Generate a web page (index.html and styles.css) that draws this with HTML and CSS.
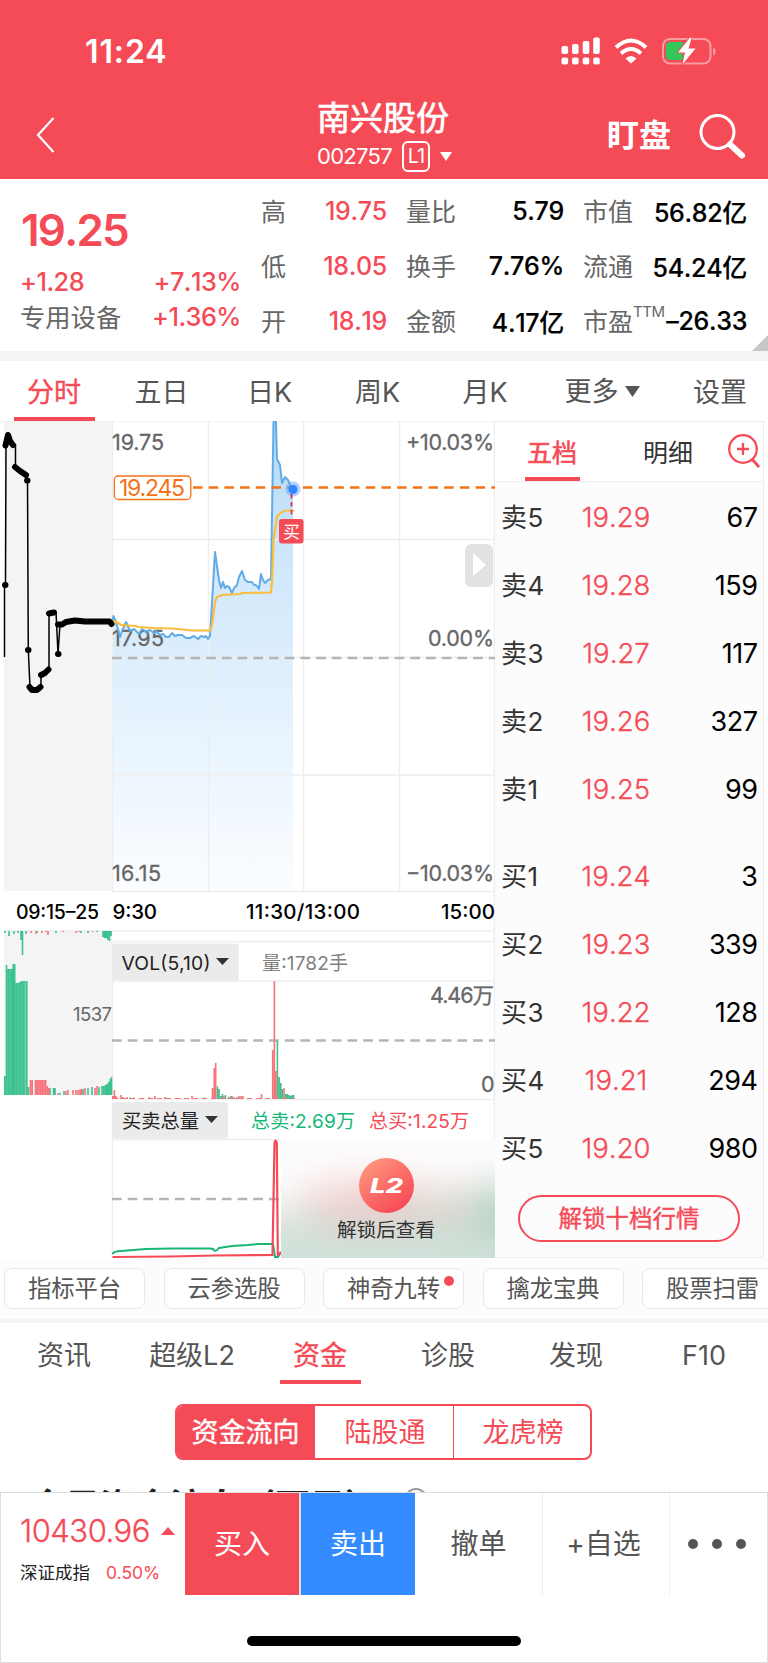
FILE: index.html
```html
<!DOCTYPE html>
<html lang="zh-CN">
<head>
<meta charset="utf-8">
<title>南兴股份 002757</title>
<link rel="stylesheet" href="styles.css">
</head>
<body>
<div class="app">
  <header class="header">
    <div class="status">
      <span class="clock">11:24</span>
      <svg class="status-icons" width="160" height="32" viewBox="558 36 160 32">
        <g fill="#fff">
          <rect x="561.5" y="46" width="6.6" height="8" rx="2"/><rect x="572" y="44" width="6.6" height="10" rx="2"/><rect x="582.7" y="41" width="6.6" height="13" rx="2"/><rect x="593.2" y="37.500" width="6.600" height="16.500" rx="2"/>
          <rect x="561.500" y="57.500" width="6.600" height="7" rx="2"/><rect x="572" y="57.500" width="6.600" height="7" rx="2"/><rect x="582.700" y="57.500" width="6.600" height="7" rx="2"/><rect x="593.200" y="57.500" width="6.600" height="7" rx="2"/>
          <path d="M625.500 58.500Q631 53.500 636.500 58.500L631 63.500Z"/>
        </g>
        <g fill="none" stroke="#fff" stroke-width="4"><path d="M616 47.500Q631 33.500 646 47.500"/><path d="M621 53.500Q631 44.500 641 53.500"/></g>
        <rect x="663" y="39" width="47.500" height="24.500" rx="7" fill="none" stroke="#fff" stroke-opacity=".45" stroke-width="2"/>
        <path d="M713.300 47.500c3 1.500 3 6.500 0 8z" fill="#fff" fill-opacity=".5"/>
        <path d="M670 42H683V60H670Q666 60 666 56V46Q666 42 670 42Z" fill="#34c759"/>
        <path d="M690 37.500L678 52.500H685L682.500 64.500L695.500 48.500H688.500L691.500 38Z" fill="#fff" stroke="#f54b57" stroke-width="2" paint-order="stroke" stroke-linejoin="round"/>
      </svg>
    </div>
    <div class="navbar">
      <svg class="back" width="20" height="38" viewBox="0 0 20 38"><path d="M17.500 2L2 19L17.500 36" fill="none" stroke="#fff" stroke-width="2.200"/></svg>
      <div class="title">
        <h1>南兴股份</h1>
        <p><span class="code">002757</span><span class="level">L1</span><svg width="12" height="9"><path d="M0 0H12L6 9Z" fill="#fff"/></svg></p>
      </div>
      <span class="watch">盯盘</span>
      <svg class="search" width="48" height="48" viewBox="0 0 48 48" fill="none" stroke="#fff"><circle cx="18.500" cy="18" r="16.500" stroke-width="3"/><path d="M31 30.500L43 41.500" stroke-width="6" stroke-linecap="round"/></svg>
    </div>
  </header>

  <section class="quote">
    <div class="price-box">
      <strong class="price">19.25</strong>
      <div class="pair"><b>+1.28</b><b>+7.13%</b></div>
      <div class="pair"><span>专用设备</span><b>+1.36%</b></div>
    </div>
    <dl class="stats">
      <div><dt>高</dt><dd class="up">19.75</dd></div><div><dt>量比</dt><dd>5.79</dd></div><div><dt>市值</dt><dd>56.82亿</dd></div>
      <div><dt>低</dt><dd class="up">18.05</dd></div><div><dt>换手</dt><dd>7.76%</dd></div><div><dt>流通</dt><dd>54.24亿</dd></div>
      <div><dt>开</dt><dd class="up">18.19</dd></div><div><dt>金额</dt><dd>4.17亿</dd></div><div><dt>市盈<sup>TTM</sup></dt><dd>–26.33</dd></div>
    </dl>
    <svg class="corner" width="16" height="16"><path d="M16 0V16H0Z" fill="#c6c6c6"/></svg>
  </section>

  <nav class="periods">
    <span class="active">分时</span><span>五日</span><span>日K</span><span>周K</span><span>月K</span>
    <span class="more">更多<svg width="15" height="11"><path d="M0 0H15L7.500 11Z" fill="#555"/></svg></span><span>设置</span>
  </nav>

  <main class="board">
    <svg class="charts" width="495" height="838" viewBox="0 421 495 838">
      <defs>
        <linearGradient id="area" x1="0" y1="421" x2="0" y2="891" gradientUnits="userSpaceOnUse"><stop offset="0" stop-color="#b4d8f6"/><stop offset=".3" stop-color="#d0e7fb"/><stop offset=".65" stop-color="#e6f3fe"/><stop offset="1" stop-color="#fbfdff"/></linearGradient>
        <linearGradient id="badge" x1="0" y1="0" x2=".7" y2="1"><stop offset="0" stop-color="#ff9f80"/><stop offset="1" stop-color="#f74956"/></linearGradient>
        <filter id="soft" x="-100%" y="-100%" width="300%" height="300%"><feGaussianBlur stdDeviation="22 20"/></filter>
        <clipPath id="lock"><rect x="281" y="1139" width="214" height="119"/></clipPath>
      </defs>
      <rect x="4" y="421" width="108" height="470" fill="#f4f4f4"/>
      <rect x="4" y="931" width="108" height="164" fill="#f4f4f4"/>
      <path d="M293 488V891H112V623L113.500 616L116 622L120 637L122 631L126 622L130 631L134 629L139 634L142 629L150 632L156 631L160 635L166 637L172 633L178 636L182 635L190 638L198 637L204 636L208 639L210 636L215 552L219 580L221 588L223 582L225 588L229 587L232 593L237 585L239 577L242 571L245 580L252 582L256 585L259 589L261 574L265 583L268 580L271 579L273.500 421H276L277 459L280 465L282 483L285 477L288 480L291 487Z" fill="url(#area)"/>
      <g class="grid"><path d="M0 421H495M112 539.500H495M112 657.500H495M112 775H495M112 891.500H495M4 930.700H495M112 941.500H495M112 981.300H495M112 1099.500H495M112 1139.500H281"/><path d="M112.500 421V891M208.500 421V891M303.500 421V891M399.500 421V891M112.500 941V1258M494.500 421V1258"/></g>
      <g class="axis">
        <text x="112" y="450" textLength="52">19.75</text><text x="406" y="450" textLength="88">+10.03%</text>
        <text x="112" y="646" textLength="52">17.95</text><text x="428" y="646" textLength="66">0.00%</text>
        <text x="112" y="881" textLength="49">16.15</text><text x="406" y="881" textLength="88">−10.03%</text>
        <text x="430" y="1003" textLength="64">4.46万</text><text x="481" y="1092">0</text>
      </g>
      <text class="num19" x="73" y="1020.500" textLength="39">1537</text>
      <path class="dash" d="M112 658H495M112 1040.500H495M112 1199H281"/>
      <path d="M112 623L113.500 616L116 622L120 637L122 631L126 622L130 631L134 629L139 634L142 629L146 632L150 630L154 633L156 631L160 635L163 634L166 637L169 637L172 633L175 636L178 635L182 635L186 638L190 638L194 636L198 639L201 636L204 637L206 636L208 639L210 636L215 552L219 580L221 588L223 582L225 588L227 586L229 587L232 593L234 588L237 585L239 577L242 571L245 580L248 582L252 582L254 585L256 585L259 589L261 574L263 580L265 583L268 580L271 579L273.500 422H276L277 459L280 465L282 483L285 477L288 480L291 487L293 488" fill="none" stroke="#61abe6" stroke-width="2" stroke-linejoin="round"/>
      <path d="M112 623L115 621L121 625L136 626L138 627L153 628L173 628.500L192 630.500H210L212 625L215 602L217 597L222 595L240 594L242 593L271 592.500L272 582L273.500 540L277 517Q281 511 287 510.500H294" fill="none" stroke="#fbbd3e" stroke-width="2.200" stroke-linejoin="round"/>
      <path d="M4.500 657V585H5.500L6 445L8 435L10 441L13 445H15.500V467L20 471L26 475L27.500 480L28.300 650L30 687L32 690H37L41 687V675L49 669.500V613.500L54 612H56L58 654L60 624L66 621L75 620L85 621.500H111" fill="none" stroke="#000" stroke-width="1.500"/>
      <path d="M5 585h.5M5.500 445.500L8 435L10 441L13 445M15 467L20 471L26 475M27 480.500h.5M28 650h.5M29.500 687L32 690H37L40.500 687M41 675L45 673L48.500 669.500M49 613.500L54 612.500M58 654h.5M58 624.500H62L66 622L75 620.500L85 621.500H109.500L111.500 624" fill="none" stroke="#000" stroke-width="6" stroke-linecap="round" stroke-linejoin="round"/>
      <path d="M193 487.500H495" stroke="#f5711a" stroke-width="2.400" stroke-dasharray="9.500 6.200"/>
      <rect x="114.300" y="476" width="76.500" height="23.500" rx="4" fill="#fff" stroke="#f5711a" stroke-width="1.300"/>
      <text class="last" x="119" y="496" textLength="66">19.245</text>
      <circle cx="293" cy="489" r="7.500" fill="#62a5ff" fill-opacity=".5"/><path d="M291.500 486V516" stroke="#e6324b" stroke-width="1.800" stroke-dasharray="4.500 3.500"/><circle cx="293" cy="489.500" r="4.500" fill="#2f86ff"/>
      <rect x="279" y="519" width="24.500" height="24.500" rx="3" fill="#f54b57"/><text class="buy-mark" x="283" y="538">买</text>
      <rect x="465" y="544" width="28" height="43" rx="6" fill="#e2e2e2"/><path d="M473 553L486 565L473 576Z" fill="#fff"/>
      <g class="times"><text class="thin" x="16" y="919" textLength="83">09:15–25</text><text x="112.500" y="919" textLength="44.500">9:30</text><text x="246" y="919" textLength="114">11:30/13:00</text><text x="441" y="919" textLength="54">15:00</text></g>
      <rect x="112" y="943.500" width="127" height="37" rx="3" fill="#ebebeb"/><text class="menu" x="121.500" y="969.500" textLength="89">VOL(5,10)</text><path d="M216 958H229L222.500 965Z" fill="#333"/>
      <text class="info" x="262" y="969.500" textLength="86" fill="#808080">量:1782手</text>
      <rect x="112" y="1102" width="116" height="36.500" rx="3" fill="#ebebeb"/><text class="menu" x="122" y="1127.500" textLength="77">买卖总量</text><path d="M205 1116H218L211.500 1123Z" fill="#333"/>
      <text class="info" x="251" y="1127.500" textLength="104" fill="#12b877">总卖:2.69万</text><text class="info" x="369" y="1127.500" textLength="100" fill="#f54b57">总买:1.25万</text>
      <g fill="none" stroke="#3cc28f" stroke-width="1.600">
        <path d="M4.800 1076V1095M6.500 965V1095M8.200 969V1095M9.900 969V1095M11.600 969V1095M13.200 964V1095M14.700 964V1095M16.400 983V1095M18.100 983V1095M19.800 982V1095M21.500 981V1095M23.200 981V1095M24.900 981V1095M26.800 981V1095M28.500 1087V1095"/>
        <path d="M50 1088V1095M53.500 1088V1095M55 1088V1095M60 1093V1095M64 1091V1095M83 1089V1095M88 1088V1095M92 1087V1095M99 1087V1095M102 1086V1095M103.700 1086V1095M105.400 1085V1095M107 1084V1095M108.600 1082V1095M110.200 1079V1095M111.500 1077V1095"/>
        <path d="M5 931V933M9 931V936M14 931V934M18 931V933M21 931V940M22.500 931V955M26 931V934M37 931V933M56 931V933M81 931V933M88 931V933M97 931V932M103 931V937M104.600 931V938M106.200 931V938M107.800 931V940M109.500 931V941M111 931V936"/>
        <path d="M217.400 1086.500V1099M219 1089V1099M221 1096V1099M222.500 1094V1099M225.500 1095V1099M228.500 1097V1099M232 1096V1099M237 1097V1099M130 1097.500V1099M155 1097.500V1099M166 1097.500V1099M204 1097.500V1099M277.400 1041V1099M279.100 1077V1099M280.800 1083V1099M282.500 1089V1099M285.700 1094V1099M287.300 1094V1099M289 1095V1099M290.600 1096V1099M292 1095V1099M293.500 1095V1099"/>
      </g>
      <g fill="none" stroke="#f7747d" stroke-width="1.600">
        <path d="M30.500 1080V1095M32.200 1080V1095M35.500 1080V1095M37.200 1080V1095M38.900 1080V1095M40.600 1080V1095M42.300 1080V1095M44 1080V1095M45.700 1080V1095M47.400 1086V1095M49 1088V1095M58 1093V1095M66 1091V1095M68 1090V1095M73 1090V1095M76 1090V1095M78 1090V1095M80 1089.500V1095M81.500 1089V1095M85 1088V1095M95 1088V1095M97 1086V1095"/>
        <path d="M31 931V933M36 931V934M42 931V933M46 931V932M48 931V935M63 931V932M76 931V933M79 931V932M93 931V932"/>
        <path d="M112.800 1096V1099M114.400 1090V1099M116 1096V1099M117.500 1098V1099M121 1095V1099M123 1097V1099M127 1097V1099M134 1097.500V1099M142 1098V1099M149 1097V1099M155 1096V1099M165 1097V1099M180 1098V1099M192 1096V1099M212.500 1088V1099M214.200 1068V1099M215.700 1063V1099M224 1096V1099M230.500 1096V1099M234 1097V1099M236 1098V1099M239 1096V1099M241 1096V1099M243 1096V1099M259 1098V1099M261.500 1094V1099M268 1098V1099M272.700 1050V1099M274.400 981V1099M276 1071V1099M284 1088V1099"/>
        <path d="M112 1098.500H295" stroke-width="1" stroke-dasharray="5 4"/>
      </g>
      <path d="M112.500 1254Q114 1251 121 1251L146 1249L172 1248.500H210L213 1249Q215 1253 219 1248L232 1246L248 1245L258 1244H273L275 1257H278L281 1252" fill="none" stroke="#18b577" stroke-width="2"/>
      <path d="M112.500 1257L170 1256.500L215 1255.500L272.500 1255L274.500 1143Q275.500 1138 276.800 1143L277.800 1255Q278 1256 281 1252" fill="none" stroke="#f54b57" stroke-width="2.200"/>
      <g clip-path="url(#lock)">
        <rect x="281" y="1139" width="214" height="119" fill="#fdfcfc"/>
        <g filter="url(#soft)"><rect x="230" y="1213" width="330" height="100" fill="#d0e1d9"/><ellipse cx="368" cy="1203" rx="70" ry="18" fill="#efc5c4"/><ellipse cx="442" cy="1206" rx="38" ry="15" fill="#dccbc4"/><ellipse cx="505" cy="1210" rx="34" ry="25" fill="#a9cdbc"/></g>
      </g>
      <circle cx="386.500" cy="1185.500" r="27.500" fill="url(#badge)"/>
      <text class="l2" x="370" y="1193" textLength="33" lengthAdjust="spacingAndGlyphs">L2</text>
      <text class="unlock" x="337" y="1237" textLength="98">解锁后查看</text>
    </svg>

    <aside class="depth">
      <div class="depth-tabs"><span class="active">五档</span><span>明细</span>
        <svg width="32" height="36" viewBox="728 434 32 36" fill="none" stroke="#f54b57" stroke-width="2.300"><circle cx="743" cy="449" r="13.800"/><path d="M737 449H749M743 443V455"/><path d="M752.500 459.500L759 467" stroke-width="2.800"/></svg>
      </div>
      <ul class="orders">
        <li><span>卖5</span><em>19.29</em><b>67</b></li><li><span>卖4</span><em>19.28</em><b>159</b></li><li><span>卖3</span><em>19.27</em><b>117</b></li><li><span>卖2</span><em>19.26</em><b>327</b></li><li><span>卖1</span><em>19.25</em><b>99</b></li>
      </ul>
      <ul class="orders bids">
        <li><span>买1</span><em>19.24</em><b>3</b></li><li><span>买2</span><em>19.23</em><b>339</b></li><li><span>买3</span><em>19.22</em><b>128</b></li><li><span>买4</span><em>19.21</em><b>294</b></li><li><span>买5</span><em>19.20</em><b>980</b></li>
      </ul>
      <button class="unlock-btn">解锁十档行情</button>
    </aside>
  </main>

  <div class="chips"><span>指标平台</span><span>云参选股</span><span class="dot">神奇九转</span><span>擒龙宝典</span><span>股票扫雷</span></div>
  <nav class="sections"><span>资讯</span><span>超级L2</span><span class="active">资金</span><span>诊股</span><span>发现</span><span>F10</span></nav>
  <div class="segmented"><span class="active">资金流向</span><span>陆股通</span><span>龙虎榜</span></div>
  <div class="flow-title"><h2>今日资金流向<span class="unit">（万元）</span></h2><i></i></div>

  <footer class="trade">
    <div class="actions">
      <div class="index"><p class="index-value">10430.96<svg width="14" height="8"><path d="M0 8H14L7 0Z" fill="#f54b57"/></svg></p><p class="index-name">深证成指<span>0.50%</span></p></div>
      <button class="buy">买入</button><button class="sell">卖出</button><button>撤单</button><button class="add">+自选</button>
      <button class="dots"><i></i><i></i><i></i></button>
    </div>
    <div class="home"></div>
  </footer>
</div>
</body>
</html>
```

FILE: styles.css
```css
* { box-sizing: border-box; margin: 0; padding: 0; }
body { background: #fff; font-family: Inter, "Noto Sans CJK SC", sans-serif; color: #555; }
button { font: inherit; color: inherit; background: none; border: 0; }
b, em, h1, h2 { font-style: normal; font-weight: 400; }
svg { display: block; flex: none; }
.app { width: 768px; height: 1663px; overflow: hidden; display: flex; flex-direction: column; white-space: nowrap; }
.app > * { flex: none; }

.header { height: 179px; background: #f54b57; color: #fff; }
.status { height: 98px; padding: 36px 50px 0 85px; display: flex; justify-content: space-between; }
.clock { font-size: 32px; line-height: 32px; font-weight: 600; letter-spacing: 0.9px; }
.navbar { display: flex; height: 81px; align-items: flex-start; }
.back { margin: 18px 0 0 36px; }
.title { margin: 3px 0 0 261px; width: 151px; }
.title h1 { font-size: 33px; line-height: 34px; -webkit-text-stroke: 0.7px #fff; }
.title p { display: flex; align-items: center; height: 34px; margin-top: 4px; }
.code { width: 85px; font-size: 22px; letter-spacing: -0.7px; line-height: 32px; }
.level { width: 28px; height: 31px; border: 2px solid #fff; border-radius: 6px; font-size: 20px; line-height: 27px; text-align: center; letter-spacing: -1px; margin-right: 10px; }
.watch { margin: 19px 0 0 139px; font-size: 32px; line-height: 38px; font-weight: 700; }
.search { margin: 16px 0 0 28px; }

.quote { position: relative; height: 182px; display: flex; border-bottom: 10px solid #f5f5f5; }
.price-box { width: 261px; padding: 28px 20px 0 20px; font-kerning: none; }
.price { display: block; font-size: 44px; line-height: 46px; font-weight: 600; color: #f54b57; letter-spacing: -1.8px; padding-left: 1px; }
.pair { display: flex; justify-content: space-between; align-items: center; height: 35px; font-size: 25.300px; color: #666; }
.price + .pair { margin-top: 11px; }
.pair b { color: #f54b57; font-weight: 500; letter-spacing: -0.5px; }
.pair span { padding-bottom: 1px; }
.stats { display: grid; grid-template-columns: 126px 158px 164px; column-gap: 19px; grid-auto-rows: 55.300px; padding-top: 4px; font-kerning: none; }
.stats div { display: flex; justify-content: space-between; align-items: center; }
.stats dt { font-size: 25px; color: #666; padding-bottom: 2px; }
.stats sup { font-size: 15px; line-height: 15px; vertical-align: 14px; letter-spacing: -0.5px; }
.stats dd { font-size: 25px; font-weight: 500; letter-spacing: -0.3px; color: #000; -webkit-text-stroke: 0.2px; }
.stats .up { color: #f54b57; -webkit-text-stroke: 0; }
.corner { position: absolute; right: 0; bottom: 0; }

.periods { height: 60px; display: grid; grid-template-columns: 108px 107px 109px 107px 108px 126px 110px; grid-template-rows: 60px; font-size: 27px; line-height: 63px; text-align: center; overflow: hidden; }
.periods .active { color: #f54b57; -webkit-text-stroke: 0.4px; position: relative; }
.active { color: #f54b57; }
.periods .active::after, .depth-tabs .active::after, .sections .active::after { content: ""; position: absolute; bottom: 0; left: 50%; width: 81px; height: 4px; margin-left: -40.500px; background: #f54b57; }
.more { display: flex; justify-content: center; align-items: center; gap: 6px; }

.board { display: flex; height: 838px; }
.charts text { font-size: 21.500px; }
.grid path { fill: none; stroke: #eeeeee; stroke-width: 1.500; }
.dash { fill: none; stroke: #b5b5b5; stroke-width: 2.300; stroke-dasharray: 9.700 6; }
.axis text { fill: #666; stroke: #666; stroke-width: 0.3; }
.charts .num19 { font-size: 18.500px; fill: #666; }
.charts .last { font-size: 23px; fill: #f5711a; }
.charts .buy-mark { font-size: 17px; fill: #fff; }
.times text { font-size: 20.500px; font-weight: 500; fill: #000; }
.times .thin { font-size: 19.500px; stroke: none; }
.charts .menu { font-size: 19.300px; fill: #222; }
.charts .info { font-size: 19px; }
.charts .l2 { font-size: 20px; font-weight: 800; font-style: italic; fill: #fff; }
.charts .unlock { font-size: 19.600px; fill: #333; }

.depth { width: 268.500px; height: 837px; background: #fcfcfc; border: solid #ececec; border-width: 1px 1.500px 1.500px 0; }
.depth-tabs { display: flex; align-items: center; height: 60px; border-bottom: 1.500px solid #ececec; font-size: 25px; line-height: 62px; color: #333; background: #fff; }
.depth-tabs span { width: 114px; height: 59px; text-align: center; position: relative; }
.depth-tabs .active { color: #f54b57; -webkit-text-stroke: 0.6px; margin-right: 2px; }
.depth-tabs .active::after { width: 55px; margin-left: -27.500px; }
.depth-tabs svg { margin-left: 3px; }
.orders { list-style: none; padding: 1px 5px 0 6px; font-kerning: none; }
.orders li { display: grid; grid-template-columns: 80px 70px 1fr; height: 68px; align-items: center; color: #333; font-size: 26px; }
.orders li span { padding-bottom: 3px; letter-spacing: 0.5px; }
.orders em { font-size: 27.500px; color: #f54b57; font-weight: 300; letter-spacing: 0; text-align: center; -webkit-text-stroke: 0.3px; }
.orders b { font-size: 27px; text-align: right; color: #000; letter-spacing: -0.5px; }
.bids { padding-top: 19px; }
.unlock-btn { display: block; width: 222px; height: 47px; margin: 13px 0 0 23px; border: 2px solid #f54b57; border-radius: 24px; color: #f54b57; font-size: 23.500px; line-height: 42px; -webkit-text-stroke: 0.4px; }

.chips { height: 64px; display: flex; gap: 18.500px; padding: 9px 0 0 4px; background: #fcfcfc; border-bottom: 4px solid #f4f4f4; }
.chips span { position: relative; flex: none; width: 141px; height: 41px; border: 1.500px solid #e8e8e8; border-radius: 8px; background: #fff; font-size: 23.300px; line-height: 39px; text-align: center; }
.dot::after { content: ""; position: absolute; right: 9px; top: 7px; width: 10px; height: 10px; border-radius: 50%; background: #f54b57; }

.sections { height: 61px; display: grid; grid-template-columns: repeat(6, 128px); grid-template-rows: 61px; text-align: center; font-size: 27px; line-height: 65px; }
.sections .active { position: relative; -webkit-text-stroke: 0.4px; }
.segmented { display: grid; grid-template-columns: 137px 139px 137px; grid-template-rows: 52px; width: 417px; height: 56px; margin: 20px 0 0 175px; border: 2px solid #f54b57; border-radius: 8px; overflow: hidden; color: #f54b57; font-size: 27px; line-height: 53px; text-align: center; }
.segmented span + span { border-left: 1.500px solid #f54b57; padding-left: 2px; }
.segmented .active { background: #f54b57; color: #fff; -webkit-text-stroke: 0.4px; }
.flow-title { height: 32px; display: flex; align-items: flex-start; padding: 20px 0 0 30px; overflow: hidden; }
.flow-title h2 { flex: none; width: 352px; font-size: 35px; line-height: 52px; font-weight: 700; color: #222; }
.unit { font-feature-settings: "chws" 0, "halt" 0, "palt" 0; text-spacing-trim: space-all; }
.flow-title i { flex: none; margin: 8px 0 0 22px; width: 24px; height: 24px; border: 2px solid #999; border-radius: 50%; }

.trade { height: 171px; background: #fff; border: 1px solid #ddd; }
.actions { height: 102px; display: grid; grid-template-columns: 184px 115px 115px 127px 127px 98px; font-size: 28px; line-height: 40px; }
.actions button { padding-bottom: 1px; }
.index { padding: 21px 0 0 19px; color: #f54b57; }
.index-value { display: flex; align-items: center; gap: 11px; font-size: 31px; line-height: 34px; font-weight: 300; letter-spacing: -0.5px; -webkit-text-stroke: 0.3px; }
.index-name { margin-top: 11px; font-size: 17.500px; line-height: 28px; color: #222; }
.index-name span { margin-left: 16px; color: #f54b57; }
.actions .buy { background: #f54b57; color: #fff; border-right: 1px solid #ddd; }
.actions .sell { background: #338bff; color: #fff; border-left: 1px solid #ddd; }
.add, .dots { border-left: 1px solid #eee; }
.actions .add { padding-right: 5px; }
.actions .dots { display: flex; align-items: center; justify-content: center; gap: 14px; padding: 0 3px 1px 0; }
.dots i { width: 10px; height: 10px; border-radius: 50%; background: #555; }
.home { width: 274px; height: 10px; margin: 41px auto 0; border-radius: 5px; background: #000; }
```
